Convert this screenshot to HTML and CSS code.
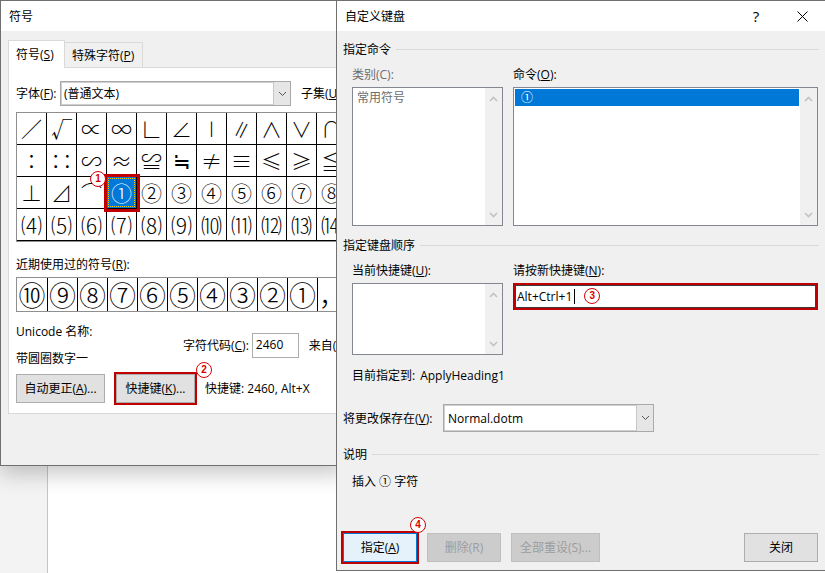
FILE: index.html
```html
<!DOCTYPE html>
<html lang="zh-CN">
<head>
<meta charset="utf-8">
<title>符号 / 自定义键盘</title>
<link rel="stylesheet" href="styles.css">
</head>
<body>
<div class="desk">
  <div class="word">
    <div class="word-side"></div>
    <div class="word-doc"></div>
  </div>

  <section class="dlg dlg-symbol">
    <header class="titlebar"><span>符号</span></header>
    <div class="sym-body">
      <div class="tabs">
        <div class="tab tab-1 active">符号(<u>S</u>)</div>
        <div class="tab tab-2">特殊字符(<u>P</u>)</div>
      </div>
      <div class="panel">
        <div class="font-row">
          <span class="font-lbl">字体(<u>F</u>):</span>
          <div class="combo combo-font">
            <span class="combo-val">(普通文本)</span>
            <span class="combo-btn"><svg width="9" height="6" viewBox="0 0 9 6"><polyline points="1,1 4.5,4.5 8,1" fill="none" stroke="#555" stroke-width="1"/></svg></span>
          </div>
          <span class="subset-lbl">子集(<u>U</u>):</span>
        </div>

        <div class="symgrid">
          <div class="cell">∕</div><div class="cell">√</div><div class="cell">∝</div><div class="cell">∞</div><div class="cell">∟</div><div class="cell">∠</div><div class="cell">∣</div><div class="cell">∥</div><div class="cell">∧</div><div class="cell">∨</div><div class="cell">∩</div>
          <div class="cell">∶</div><div class="cell">∷</div><div class="cell">∽</div><div class="cell">≈</div><div class="cell">≌</div><div class="cell">≒</div><div class="cell">≠</div><div class="cell">≡</div><div class="cell">≤</div><div class="cell">≥</div><div class="cell">≦</div>
          <div class="cell">⊥</div><div class="cell">⊿</div><div class="cell">⌒</div><div class="cell sel">①<span class="badge badge-1">1</span></div><div class="cell">②</div><div class="cell">③</div><div class="cell">④</div><div class="cell">⑤</div><div class="cell">⑥</div><div class="cell">⑦</div><div class="cell">⑧</div>
          <div class="cell">⑷</div><div class="cell">⑸</div><div class="cell">⑹</div><div class="cell">⑺</div><div class="cell">⑻</div><div class="cell">⑼</div><div class="cell">⑽</div><div class="cell">⑾</div><div class="cell">⑿</div><div class="cell">⒀</div><div class="cell">⒁</div>
        </div>

        <div class="recent-lbl">近期使用过的符号(<u>R</u>):</div>
        <div class="recent">
          <div class="rc">⑩</div><div class="rc">⑨</div><div class="rc">⑧</div><div class="rc">⑦</div><div class="rc">⑥</div><div class="rc">⑤</div><div class="rc">④</div><div class="rc">③</div><div class="rc">②</div><div class="rc">①</div><div class="rc">，</div>
        </div>

        <div class="info">
          <div class="uname">
            <div>Unicode 名称:</div>
            <div>带圆圈数字一</div>
          </div>
          <div class="code">
            <span>字符代码(<u>C</u>):</span>
            <div class="code-input">2460</div>
            <span class="from-lbl">来自(<u>M</u>):</span>
          </div>
        </div>

        <div class="btn-row">
          <div class="btn btn-auto">自动更正(<u>A</u>)...</div>
          <div class="btn btn-key">快捷键(<u>K</u>)...<span class="badge badge-2">2</span></div>
          <span class="key-note">快捷键: 2460, Alt+X</span>
        </div>
      </div>
    </div>
  </section>

  <section class="dlg dlg-kbd">
    <header class="titlebar">
      <span>自定义键盘</span>
      <span class="tb-help">?</span>
      <span class="tb-close"><svg width="11" height="11" viewBox="0 0 11 11"><path d="M0.5 0.5L10.5 10.5M10.5 0.5L0.5 10.5" stroke="#000" stroke-width="1"/></svg></span>
    </header>
    <div class="kbd-body">
      <div class="group-h">指定命令</div>
      <div class="cols">
        <div class="col-l">
          <div class="col-lbl disabled">类别(C):</div>
          <div class="listbox lb-tall">
            <div class="lb-items"><div class="lb-item disabled">常用符号</div></div>
            <div class="lb-scroll">
              <svg width="9" height="6" viewBox="0 0 9 6"><polyline points="1,5 4.5,1.5 8,5" fill="none" stroke="#c2c2c2" stroke-width="1.6"/></svg>
              <svg width="9" height="6" viewBox="0 0 9 6"><polyline points="1,1 4.5,4.5 8,1" fill="none" stroke="#c2c2c2" stroke-width="1.6"/></svg>
            </div>
          </div>
        </div>
        <div class="col-r">
          <div class="col-lbl">命令(<u>O</u>):</div>
          <div class="listbox lb-tall">
            <div class="lb-items"><div class="lb-item sel-item">①</div></div>
            <div class="lb-scroll">
              <svg width="9" height="6" viewBox="0 0 9 6"><polyline points="1,5 4.5,1.5 8,5" fill="none" stroke="#c2c2c2" stroke-width="1.6"/></svg>
              <svg width="9" height="6" viewBox="0 0 9 6"><polyline points="1,1 4.5,4.5 8,1" fill="none" stroke="#c2c2c2" stroke-width="1.6"/></svg>
            </div>
          </div>
        </div>
      </div>

      <div class="group-h group-2">指定键盘顺序</div>
      <div class="cols">
        <div class="col-l">
          <div class="col-lbl">当前快捷键(<u>U</u>):</div>
          <div class="listbox lb-short">
            <div class="lb-items"></div>
            <div class="lb-scroll">
              <svg width="9" height="6" viewBox="0 0 9 6"><polyline points="1,5 4.5,1.5 8,5" fill="none" stroke="#c2c2c2" stroke-width="1.6"/></svg>
              <svg width="9" height="6" viewBox="0 0 9 6"><polyline points="1,1 4.5,4.5 8,1" fill="none" stroke="#c2c2c2" stroke-width="1.6"/></svg>
            </div>
          </div>
        </div>
        <div class="col-r">
          <div class="col-lbl">请按新快捷键(<u>N</u>):</div>
          <div class="keyinput"><span>Alt+Ctrl+1</span><span class="caret"></span><span class="badge badge-3">3</span></div>
        </div>
      </div>

      <div class="assigned">目前指定到:<span class="assigned-val">ApplyHeading1</span></div>

      <div class="save-row">
        <span class="save-lbl">将更改保存在(<u>V</u>):</span>
        <div class="combo combo-save">
          <span class="combo-val">Normal.dotm</span>
          <span class="combo-btn"><svg width="9" height="6" viewBox="0 0 9 6"><polyline points="1,1 4.5,4.5 8,1" fill="none" stroke="#555" stroke-width="1"/></svg></span>
        </div>
      </div>

      <div class="group-h group-3">说明</div>
      <div class="desc">插入 ① 字符</div>

      <div class="kbd-btns">
        <div class="btn btn-assign">指定(<u>A</u>)<span class="badge badge-4">4</span></div>
        <div class="btn btn-dis btn-del">删除(R)</div>
        <div class="btn btn-dis btn-reset">全部重设(S)...</div>
        <div class="btn btn-close">关闭</div>
      </div>
    </div>
  </section>
</div>
</body>
</html>
```

FILE: styles.css
```css
* { box-sizing: border-box; margin: 0; padding: 0; }

body {
  width: 825px;
  height: 573px;
  overflow: hidden;
  font-family: "Open Sans", "Noto Sans CJK SC", sans-serif;
  font-size: 12px;
  line-height: 17px;
  color: #000;
  background: #fff;
}

u { text-decoration: underline; text-underline-offset: 1px; }

.desk {
  position: relative;
  width: 825px;
  height: 573px;
  overflow: hidden;
}

/* Word window behind */
.word { display: flex; height: 100%; }
.word-side { width: 48px; background: #f3f3f3; border-right: 1px solid #c6c6c6; }
.word-doc { flex: 1; background: #fff; }

/* dialogs */
.dlg {
  position: absolute;
  top: 0;
  display: flex;
  flex-direction: column;
  background: #f0f0f0;
  border: 1px solid #6f6f6f;
}
.dlg-symbol {
  left: 0;
  width: 345px;
  height: 466px;
  overflow: hidden;
  box-shadow: 0 8px 20px rgba(0, 0, 0, 0.22);
}
.dlg-kbd {
  left: 336px;
  width: 490px;
  height: 571px;
  z-index: 3;
}

.titlebar {
  flex: none;
  height: 30px;
  background: #fff;
  display: flex;
  align-items: center;
  padding-left: 8px;
}

/* ---------- Symbol dialog ---------- */
.sym-body { padding: 9px 0 0 7px; }

.tabs {
  display: flex;
  align-items: flex-end;
  height: 27px;
  position: relative;
  z-index: 1;
}
.tab {
  height: 25px;
  padding-left: 7px;
  border: 1px solid #d9d9d9;
  border-bottom: none;
  background: #f0f0f0;
  display: flex;
  align-items: center;
}
.tab-1 { width: 57px; }
.tab-2 { width: 78px; border-left: none; }
.tab.active { height: 28px; margin-bottom: -1px; background: #fff; }

.panel {
  width: 345px;
  height: 347px;
  background: #fff;
  border: 1px solid #d9d9d9;
  padding: 13px 0 0 7px;
  overflow: hidden;
}

.font-row { display: flex; align-items: center; height: 25px; white-space: nowrap; }
.font-lbl { width: 44px; }
.subset-lbl { margin-left: 10px; }

.combo {
  height: 25px;
  border: 1px solid #a9a9a9;
  box-shadow: inset 0 0 0 1px #cfcfcf;
  background: #fff;
  display: flex;
  align-items: stretch;
  flex: none;
}
.combo-font { width: 231px; }
.combo-val { flex: 1; padding-left: 3px; display: flex; align-items: center; white-space: nowrap; }
.combo-btn {
  width: 17px;
  background: #e6e6e6;
  border-left: 1px solid #c8c8c8;
  display: flex;
  align-items: center;
  justify-content: center;
}

.symgrid {
  margin-top: 6px;
  display: grid;
  grid-template-columns: repeat(11, 30px);
  grid-auto-rows: 32px;
  border: 1px solid #8f8f8f;
  width: max-content;
}
.cell {
  border-right: 1px solid #000;
  border-bottom: 1px solid #000;
  display: flex;
  align-items: center;
  justify-content: center;
  font-family: "Noto Sans CJK SC", "DejaVu Sans", sans-serif;
  font-size: 21px;
  font-weight: 300;
  line-height: 1;
}
.cell.sel {
  position: relative;
  z-index: 2;
  background: #0078d7;
  color: #fff;
  outline: 3px solid #c00000;
}
.cell.sel::after {
  content: "";
  position: absolute;
  inset: 1px;
  border: 1px dotted #f5d000;
}

.recent-lbl { margin-top: 14px; }
.recent {
  margin-top: 4px;
  display: grid;
  grid-template-columns: 31px repeat(10, 30px);
  height: 35px;
  border: 1px solid #8f8f8f;
  width: max-content;
}
.rc {
  border-right: 1px solid #000;
  display: flex;
  align-items: center;
  justify-content: center;
  font-family: "Noto Sans CJK SC", "DejaVu Sans", sans-serif;
  font-size: 27px;
  font-weight: 300;
  line-height: 1;
}

.info { display: flex; margin-top: 11px; }
.uname { width: 167px; flex: none; }
.uname div + div { margin-top: 10px; }
.code {
  display: flex;
  align-items: center;
  height: 25px;
  margin-top: 10px;
  white-space: nowrap;
}
.code-input {
  width: 47px;
  height: 25px;
  margin-left: 3px;
  border: 1px solid #adadad;
  background: #fff;
  padding: 2px 0 0 3px;
  flex: none;
}
.from-lbl { margin-left: 10px; }

.btn-row { display: flex; align-items: center; margin-top: 7px; white-space: nowrap; }
.btn {
  height: 29px;
  border: 1px solid #adadad;
  background: #e1e1e1;
  display: flex;
  align-items: center;
  justify-content: center;
  white-space: nowrap;
  position: relative;
  flex: none;
}
.btn-auto { width: 89px; }
.btn-key { width: 79px; margin-left: 11px; outline: 2px solid #c00000; }
.key-note { margin-left: 10px; }

/* annotation badges */
.badge {
  position: absolute;
  width: 16px;
  height: 16px;
  border-radius: 50%;
  border: 1.6px solid #d40000;
  background: #fff;
  color: #d40000;
  font: bold 10px/1 "Liberation Sans", sans-serif;
  display: flex;
  align-items: center;
  justify-content: center;
  z-index: 5;
}
.badge-1 { left: -17px; top: -6px; }
.badge-2 { left: 79px; top: -13px; }
.badge-4 { left: 66px; top: -17px; }
.keyinput .badge-3 { position: static; margin-left: 9px; margin-top: -2px; }

/* ---------- Keyboard dialog ---------- */
.tb-help {
  margin-left: auto;
  width: 46px;
  text-align: center;
  font-size: 15px;
}
.tb-close {
  width: 46px;
  height: 30px;
  display: flex;
  align-items: center;
  justify-content: center;
}

.kbd-body {
  flex: 1;
  display: flex;
  flex-direction: column;
  padding: 10px 6px 8px 6px;
}

.group-h { display: flex; align-items: center; gap: 5px; }
.group-h::after { content: ""; flex: 1; height: 1px; background: #d9d9d9; }
.group-2 { margin-top: 11px; }
.group-3 { margin-top: 14px; }

.cols { display: flex; gap: 10px; padding-left: 9px; margin-top: 8px; }
.col-l { width: 151px; }
.col-r { width: 305px; }
.disabled { color: #6d6d6d; }

.listbox {
  margin-top: 4px;
  border: 1px solid #828790;
  background: #fff;
  display: flex;
}
.lb-tall { height: 139px; }
.lb-short { height: 72px; }
.lb-items { flex: 1; padding: 1px; }
.lb-item { height: 17px; padding-left: 3px; }
.sel-item { background: #0078d7; color: #fff; padding-left: 6px; }
.lb-scroll {
  width: 17px;
  background: #f0f0f0;
  display: flex;
  flex-direction: column;
  justify-content: space-between;
  align-items: center;
  padding: 8px 0 7px;
}

.keyinput {
  margin-top: 4px;
  height: 27px;
  border: 2px solid #c00000;
  box-shadow: inset 0 0 0 1px #3c3c3c;
  background: #fff;
  display: flex;
  align-items: center;
  padding-left: 2px;
}
.caret { width: 1px; height: 15px; background: #000; margin-left: 2px; }

.assigned { margin-top: 12px; padding-left: 9px; }
.assigned-val { margin-left: 5px; }

.save-row { display: flex; align-items: center; margin-top: 20px; }
.save-lbl { width: 100px; white-space: nowrap; }
.combo-save { width: 211px; height: 28px; }
.combo-save .combo-val { padding-left: 4px; }

.desc { margin-top: 10px; padding-left: 9px; }

.kbd-btns { margin-top: auto; display: flex; align-items: center; }
.btn-assign {
  width: 74px;
  background: #e5f1fb;
  border-color: #0078d7;
  outline: 2px solid #c00000;
}
.btn-dis { background: #cccccc; border-color: #bfbfbf; color: #9c9c9c; }
.btn-del { width: 74px; margin-left: 10px; }
.btn-reset { width: 89px; margin-left: 10px; }
.btn-close { width: 74px; margin-left: auto; margin-right: 1px; }
```
